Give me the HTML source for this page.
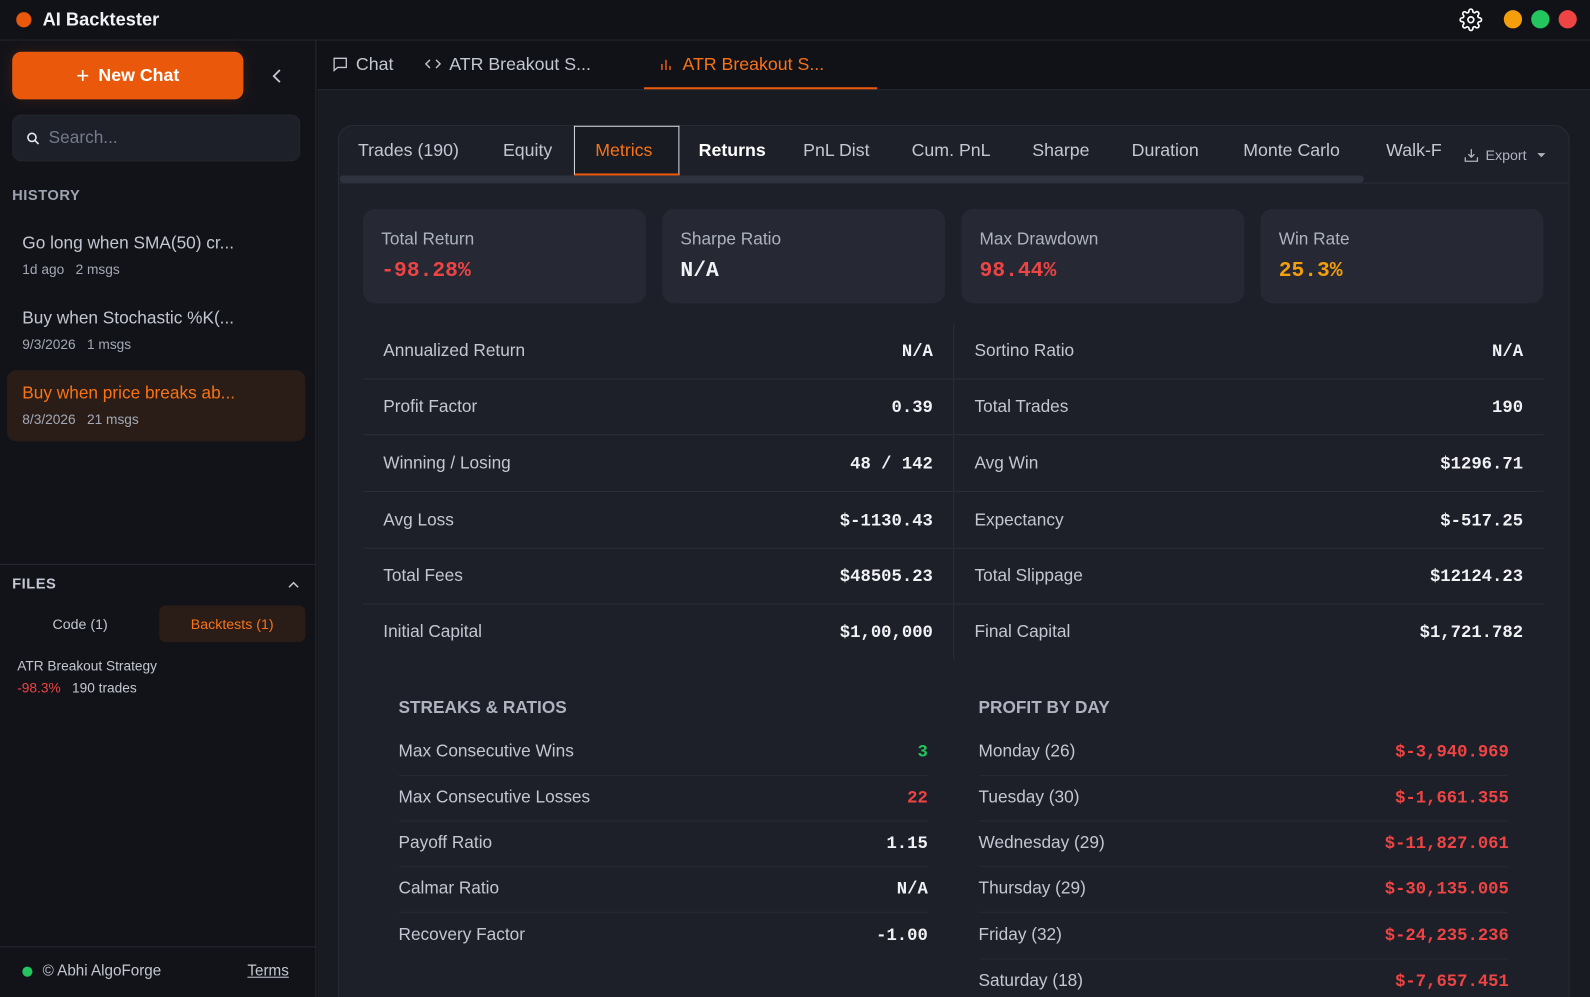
<!DOCTYPE html>
<html><head><meta charset="utf-8"><style>
*{box-sizing:border-box;margin:0;padding:0}
html,body{width:1590px;height:997px;overflow:hidden;background:#111218;font-family:"Liberation Sans",sans-serif}
#s{position:absolute;left:0;top:0;width:1568px;height:983px;overflow:hidden;transform:scale(1.01403,1.01424);transform-origin:0 0;background:#111218;color:#d6d9e0}
.a{position:absolute}
.mono{font-family:"Liberation Mono",monospace;font-weight:bold}
.row{position:absolute;height:55px;border-bottom:1px solid #2a2d37;font-size:17px;color:#c3c7d1}
.row span{position:absolute;top:17px}
.row span.mono,.sr span.mono{margin-top:2px}
.sr{position:absolute;height:45px;border-bottom:1px solid #262933;font-size:17px;color:#c3c7d1}
.sr span{position:absolute;top:11px}
.red{color:#ef4444}
.card{position:absolute;top:206px;width:279px;height:93px;background:#262934;border-radius:12px}
.card .l{position:absolute;left:18px;top:20px;font-size:17px;color:#aeb3bf}
.card .v{position:absolute;left:18px;top:50px;font-size:21px}
.tab{position:absolute;top:138px;font-size:17.5px;color:#c3c7d1}
</style></head><body><div id="s">
<div class="a" style="left:0;top:0;width:1568px;height:40px;border-bottom:1px solid #262933"></div>
<div class="a" style="left:16px;top:12px;width:15px;height:15px;border-radius:50%;background:#ea580c"></div>
<div class="a" style="left:42px;top:9px;font-size:18px;font-weight:bold;color:#f1f2f5">AI Backtester</div>
<svg class="a" style="left:1439px;top:8px" width="23" height="23" viewBox="0 0 24 24" fill="none" stroke="#fff" stroke-width="1.7"><circle cx="12" cy="12" r="3"/><path d="M19.4 15a1.65 1.65 0 0 0 .33 1.82l.06.06a2 2 0 1 1-2.830 2.83l-.06-.06a1.65 1.65 0 0 0-1.82-.33 1.65 1.65 0 0 0-1 1.51V21a2 2 0 1 1-4 0v-.09A1.65 1.650 0 0 0 9 19.4a1.65 1.65 0 0 0-1.82.33l-.06.06a2 2 0 1 1-2.83-2.83l.06-.06A1.65 1.65 0 0 0 4.68 15a1.65 1.65 0 0 0-1.51-1H3a2 2 0 1 1 0-4h.09A1.65 1.65 0 0 0 4.6 9a1.65 1.65 0 0 0-.33-1.82l-.06-.06a2 2 0 1 1 2.83-2.830l.06.06A1.65 1.65 0 0 0 9 4.68 1.65 1.65 0 0 0 10 3.17V3a2 2 0 1 1 4 0v.09a1.65 1.65 0 0 0 1 1.51 1.65 1.65 0 0 0 1.82-.33l.06-.06a2 2 0 1 1 2.83 2.83l-.06.06A1.65 1.65 0 0 0 19.4 9a1.65 1.65 0 0 0 1.51 1H21a2 2 0 1 1 0 4h-.09a1.65 1.65 0 0 0-1.51 1z"/></svg>
<div class="a" style="left:1483px;top:10px;width:18px;height:18px;border-radius:50%;background:#f59e0b"></div>
<div class="a" style="left:1510px;top:10px;width:18px;height:18px;border-radius:50%;background:#22c55e"></div>
<div class="a" style="left:1537px;top:10px;width:18px;height:18px;border-radius:50%;background:#ef4444"></div>
<div class="a" style="left:0;top:40px;width:312px;height:943px;background:#121319;border-right:1px solid #262933"></div>
<div class="a" style="left:12px;top:51px;width:228px;height:47px;border-radius:9px;background:#ea580c;color:#fff;font-size:17.5px;font-weight:bold;text-align:center;line-height:47px;box-shadow:0 0 16px rgba(234,88,12,.15)"><span style="font-size:22px;font-weight:normal;vertical-align:-2px;margin-right:9px">+</span>New Chat</div>
<svg class="a" style="left:266px;top:67px" width="14" height="16" viewBox="0 0 14 16" fill="none" stroke="#c3c7d1" stroke-width="1.8"><path d="M10 2 4 8l6 6"/></svg>
<div class="a" style="left:12px;top:113px;width:284px;height:46px;border-radius:9px;background:#1e2029;border:1px solid #23262f"></div>
<svg class="a" style="left:26px;top:130px" width="13" height="13" viewBox="0 0 13 13" fill="none" stroke="#e5e7eb" stroke-width="1.6"><circle cx="5.5" cy="5.5" r="4"/><path d="M8.5 8.5 12 12"/></svg>
<div class="a" style="left:48px;top:126px;font-size:17px;color:#737a8c">Search...</div>
<div class="a" style="left:12px;top:185px;font-size:14.5px;font-weight:bold;color:#9ca3af;letter-spacing:.5px">HISTORY</div>
<div class="a" style="left:22px;top:230px;font-size:17px;color:#c3c7d1">Go long when SMA(50) cr...</div>
<div class="a" style="left:22px;top:258px;font-size:13.5px;color:#a3a9b6">1d ago&nbsp;&nbsp;&nbsp;2 msgs</div>
<div class="a" style="left:22px;top:304px;font-size:17px;color:#c3c7d1">Buy when Stochastic %K(...</div>
<div class="a" style="left:22px;top:332px;font-size:13.5px;color:#a3a9b6">9/3/2026&nbsp;&nbsp;&nbsp;1 msgs</div>
<div class="a" style="left:7px;top:365px;width:294px;height:70px;border-radius:9px;background:#2a1d17"></div>
<div class="a" style="left:22px;top:378px;font-size:17px;color:#f97316">Buy when price breaks ab...</div>
<div class="a" style="left:22px;top:406px;font-size:13.5px;color:#a3a9b6">8/3/2026&nbsp;&nbsp;&nbsp;21 msgs</div>
<div class="a" style="left:0;top:556px;width:312px;height:1px;background:#262933"></div>
<div class="a" style="left:12px;top:568px;font-size:14.5px;font-weight:bold;color:#c3c7d1;letter-spacing:.5px">FILES</div>
<svg class="a" style="left:284px;top:573px" width="11" height="8" viewBox="0 0 11 8" fill="none" stroke="#c3c7d1" stroke-width="1.5"><path d="M1 6 5.5 1.5 10 6"/></svg>
<div class="a" style="left:12px;top:607px;width:134px;text-align:center;font-size:14px;color:#c3c7d1">Code (1)</div>
<div class="a" style="left:157px;top:597px;width:144px;height:36px;border-radius:6px;background:#2a1d17;text-align:center;line-height:36px;font-size:14px;color:#f97316">Backtests (1)</div>
<div class="a" style="left:17px;top:649px;font-size:13.5px;color:#c3c7d1">ATR Breakout Strategy</div>
<div class="a" style="left:17px;top:671px;font-size:13.5px;color:#c3c7d1"><span class="red">-98.3%</span>&nbsp;&nbsp;&nbsp;190 trades</div>
<div class="a" style="left:0;top:933px;width:312px;height:1px;background:#262933"></div>
<div class="a" style="left:22px;top:953px;width:10px;height:10px;border-radius:50%;background:#22c55e"></div>
<div class="a" style="left:42px;top:949px;font-size:15px;color:#c3c7d1">© Abhi AlgoForge</div>
<div class="a" style="left:244px;top:949px;font-size:15px;color:#c3c7d1;text-decoration:underline">Terms</div>
<div class="a" style="left:313px;top:88px;width:1255px;height:895px;background:#191b22;border-top:1px solid #262933"></div>
<svg class="a" style="left:328px;top:56px" width="15" height="15" viewBox="0 0 15 15" fill="none" stroke="#c3c7d1" stroke-width="1.3"><path d="M1.5 1.5h12v9H5l-3.5 3z"/></svg>
<div class="a" style="left:351px;top:53px;font-size:17.5px;color:#c3c7d1">Chat</div>
<svg class="a" style="left:419px;top:57px" width="16" height="12" viewBox="0 0 16 12" fill="none" stroke="#c3c7d1" stroke-width="1.4"><path d="M5 2 1 6l4 4M11 2l4 4-4 4"/></svg>
<div class="a" style="left:443px;top:53px;font-size:17.5px;color:#c3c7d1">ATR Breakout S...</div>
<div class="a" style="left:635px;top:86px;width:230px;height:2px;background:#ea580c"></div>
<svg class="a" style="left:651px;top:57px" width="13" height="13" viewBox="0 0 13 13" fill="#ea580c"><rect x="1" y="6" width="1.5" height="6"/><rect x="5" y="2" width="1.5" height="10"/><rect x="9" y="8" width="1.5" height="4"/></svg>
<div class="a" style="left:673px;top:53px;font-size:17.5px;color:#f97316">ATR Breakout S...</div>
<div class="a" style="left:333px;top:123px;width:1215px;height:860px;border-radius:16px 16px 0 0;border:1px solid #2a2d37;border-bottom:none;background:#1e2029"></div>
<div class="a" style="left:334px;top:180px;width:1213px;height:1px;background:#2a2d37"></div>
<div class="a" style="left:335px;top:173px;width:1010px;height:7px;border-radius:4px;background:#2f3340"></div>
<div class="tab" style="left:353px">Trades (190)</div>
<div class="tab" style="left:496px">Equity</div>
<div class="a" style="left:566px;top:124px;width:104px;height:49px;border:1px solid #d6d9e0;border-bottom:2px solid #ea580c;background:#191b22"></div>
<div class="tab" style="left:587px;color:#f97316">Metrics</div>
<div class="tab" style="left:689px;color:#fff;font-weight:bold">Returns</div>
<div class="tab" style="left:792px">PnL Dist</div>
<div class="tab" style="left:899px">Cum. PnL</div>
<div class="tab" style="left:1018px">Sharpe</div>
<div class="tab" style="left:1116px">Duration</div>
<div class="tab" style="left:1226px">Monte Carlo</div>
<div class="tab" style="left:1367px;width:55px;overflow:hidden;white-space:nowrap">Walk-Forward</div>
<svg class="a" style="left:1444px;top:146px" width="14" height="14" viewBox="0 0 14 14" fill="none" stroke="#aeb3bf" stroke-width="1.3"><path d="M7 1v8M4 6l3 3 3-3M1 9v4h12V9"/></svg>
<div class="a" style="left:1465px;top:145px;font-size:14px;color:#aeb3bf">Export</div>
<div class="a" style="left:1516px;top:151px;width:0;height:0;border-left:4px solid transparent;border-right:4px solid transparent;border-top:4px solid #aeb3bf"></div>
<div class="card" style="left:358px"><div class="l">Total Return</div><div class="v mono red">-98.28%</div></div>
<div class="card" style="left:653px"><div class="l">Sharpe Ratio</div><div class="v mono" style="color:#f1f2f5">N/A</div></div>
<div class="card" style="left:948px"><div class="l">Max Drawdown</div><div class="v mono red">98.44%</div></div>
<div class="card" style="left:1243px"><div class="l">Win Rate</div><div class="v mono" style="color:#f59e0b">25.3%</div></div>
<div class="a" style="left:940px;top:319px;width:1px;height:331px;background:#2a2d37"></div>
<div class="row" style="left:358px;top:319px;width:582px"><span style="left:20px">Annualized Return</span><span class="mono" style="right:20px;color:#f1f2f5">N/A</span></div>
<div class="row" style="left:941px;top:319px;width:581px"><span style="left:20px">Sortino Ratio</span><span class="mono" style="right:20px;color:#f1f2f5">N/A</span></div>
<div class="row" style="left:358px;top:374px;width:582px"><span style="left:20px">Profit Factor</span><span class="mono" style="right:20px;color:#f1f2f5">0.39</span></div>
<div class="row" style="left:941px;top:374px;width:581px"><span style="left:20px">Total Trades</span><span class="mono" style="right:20px;color:#f1f2f5">190</span></div>
<div class="row" style="left:358px;top:430px;width:582px"><span style="left:20px">Winning / Losing</span><span class="mono" style="right:20px;color:#f1f2f5">48 / 142</span></div>
<div class="row" style="left:941px;top:430px;width:581px"><span style="left:20px">Avg Win</span><span class="mono" style="right:20px;color:#f1f2f5">$1296.71</span></div>
<div class="row" style="left:358px;top:486px;width:582px"><span style="left:20px">Avg Loss</span><span class="mono" style="right:20px;color:#f1f2f5">$-1130.43</span></div>
<div class="row" style="left:941px;top:486px;width:581px"><span style="left:20px">Expectancy</span><span class="mono" style="right:20px;color:#f1f2f5">$-517.25</span></div>
<div class="row" style="left:358px;top:541px;width:582px"><span style="left:20px">Total Fees</span><span class="mono" style="right:20px;color:#f1f2f5">$48505.23</span></div>
<div class="row" style="left:941px;top:541px;width:581px"><span style="left:20px">Total Slippage</span><span class="mono" style="right:20px;color:#f1f2f5">$12124.23</span></div>
<div class="row" style="left:358px;top:596px;width:582px;border:none"><span style="left:20px">Initial Capital</span><span class="mono" style="right:20px;color:#f1f2f5">$1,00,000</span></div>
<div class="row" style="left:941px;top:596px;width:581px;border:none"><span style="left:20px">Final Capital</span><span class="mono" style="right:20px;color:#f1f2f5">$1,721.782</span></div>
<div class="a" style="left:393px;top:688px;font-size:17px;font-weight:bold;color:#aeb3bf">STREAKS &amp; RATIOS</div>
<div class="sr" style="left:393px;top:720px;width:522px"><span style="left:0">Max Consecutive Wins</span><span class="mono" style="right:0;color:#22c55e">3</span></div>
<div class="sr" style="left:393px;top:765px;width:522px"><span style="left:0">Max Consecutive Losses</span><span class="mono red" style="right:0">22</span></div>
<div class="sr" style="left:393px;top:810px;width:522px"><span style="left:0">Payoff Ratio</span><span class="mono" style="right:0;color:#f1f2f5">1.15</span></div>
<div class="sr" style="left:393px;top:855px;width:522px"><span style="left:0">Calmar Ratio</span><span class="mono" style="right:0;color:#f1f2f5">N/A</span></div>
<div class="sr" style="left:393px;top:901px;width:522px;border:none"><span style="left:0">Recovery Factor</span><span class="mono" style="right:0;color:#f1f2f5">-1.00</span></div>
<div class="a" style="left:965px;top:688px;font-size:17px;font-weight:bold;color:#aeb3bf">PROFIT BY DAY</div>
<div class="sr" style="left:965px;top:720px;width:523px"><span style="left:0">Monday (26)</span><span class="mono red" style="right:0">$-3,940.969</span></div>
<div class="sr" style="left:965px;top:765px;width:523px"><span style="left:0">Tuesday (30)</span><span class="mono red" style="right:0">$-1,661.355</span></div>
<div class="sr" style="left:965px;top:810px;width:523px"><span style="left:0">Wednesday (29)</span><span class="mono red" style="right:0">$-11,827.061</span></div>
<div class="sr" style="left:965px;top:855px;width:523px"><span style="left:0">Thursday (29)</span><span class="mono red" style="right:0">$-30,135.005</span></div>
<div class="sr" style="left:965px;top:901px;width:523px"><span style="left:0">Friday (32)</span><span class="mono red" style="right:0">$-24,235.236</span></div>
<div class="sr" style="left:965px;top:946px;width:523px;height:37px;border:none"><span style="left:0">Saturday (18)</span><span class="mono red" style="right:0">$-7,657.451</span></div>
</div></body></html>
